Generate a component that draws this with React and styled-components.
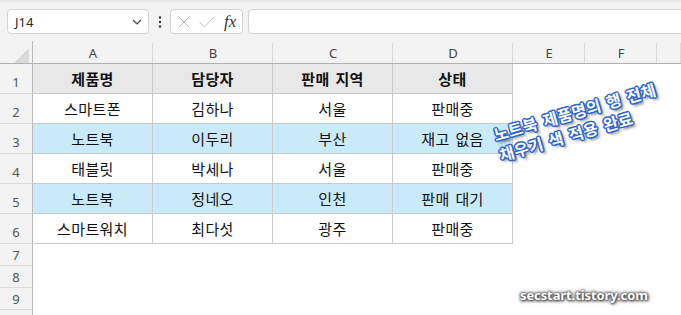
import React from 'react';
import styled, { createGlobalStyle } from 'styled-components';

const Global = createGlobalStyle`
  html, body { margin: 0; padding: 0; background: #fff; overflow: hidden; }
  body { font-family: "Noto Sans", "Noto Sans CJK KR", sans-serif; }
`;

const Page = styled.div`
  position: relative;
  width: 681px;
  height: 315px;
  overflow: hidden;
  background: #fff;
`;

const FormulaBar = styled.div`
  display: flex;
  align-items: stretch;
  height: 41px;
  box-sizing: border-box;
  padding: 7px 0 7px 7px;
  background: #f3f3f3;
  border-top: 2px solid #e6e6e6;
`;

const NameBox = styled.div`
  width: 142px;
  box-sizing: border-box;
  display: flex;
  align-items: center;
  justify-content: space-between;
  padding: 0 6px 0 7px;
  background: #fff;
  border: 1px solid #d3d3d3;
  border-radius: 4px;
  font-size: 13px;
  color: #262626;
`;

const DotsArea = styled.div`
  width: 21px;
  display: flex;
  align-items: center;
  justify-content: center;
`;

const FxButtons = styled.div`
  width: 73px;
  box-sizing: border-box;
  display: flex;
  align-items: center;
  gap: 8px;
  padding: 0 4px 0 6px;
  background: #fff;
  border: 1px solid #d3d3d3;
  border-radius: 4px;
`;

const FxLabel = styled.span`
  font-family: "Liberation Serif", "DejaVu Serif", serif;
  font-style: italic;
  font-size: 17px;
  color: #333;
  margin-left: 1px;
`;

const FormulaInput = styled.div`
  flex: 1;
  margin-left: 5px;
  margin-right: -8px;
  background: #fff;
  border: 1px solid #d3d3d3;
  border-radius: 4px;
`;

const Sheet = styled.div`
  display: grid;
  grid-template-columns: 33px 120px 120px 120px 120px 72px 72px 1fr;
  grid-template-rows: 23px repeat(6, 30px) repeat(4, 22px);
`;

const Corner = styled.div`
  background: #f3f3f3;
  border-right: 1px solid #b9b9b9;
  border-bottom: 1px solid #b0b0b0;
  display: flex;
  align-items: flex-end;
  justify-content: flex-end;
  padding: 0 3px 0 0;
`;

const ColHeader = styled.div`
  background:
    linear-gradient(#dcdcdc, #dcdcdc) right bottom / 1px calc(100% - 2px) no-repeat,
    #f3f3f3;
  border-bottom: 1px solid #b0b0b0;
  display: flex;
  align-items: center;
  justify-content: center;
  font-size: 13px;
  color: #444;
  padding-top: 1px;
`;

const RowHeader = styled.div`
  background: #f3f3f3;
  border-right: 1px solid #b9b9b9;
  border-bottom: 1px solid #dadada;
  display: flex;
  align-items: flex-end;
  justify-content: center;
  padding-bottom: ${p => (p.$tall ? '3px' : '2px')};
  font-size: 13px;
  line-height: 16px;
  color: #555;
  box-sizing: border-box;
`;

const bgFor = (v) => (v === 'head' ? '#e8e8e8' : v === 'blue' ? '#c9eaf9' : '#ffffff');

const Cell = styled.div`
  background: ${p => bgFor(p.$variant)};
  border-right: 1px solid #c9c9c9;
  border-bottom: 1px solid #c9c9c9;
  display: flex;
  align-items: center;
  justify-content: center;
  font-family: "Noto Sans CJK KR", "Noto Sans", sans-serif;
  font-size: 15px;
  letter-spacing: 0.4px;
  word-spacing: 2px;
  font-weight: ${p => (p.$variant === 'head' ? 700 : 400)};
  color: #111;
  white-space: pre;
`;

const Empty = styled.div`
  background: #fff;
`;

const Annotation = styled.div`
  position: absolute;
  left: 491px;
  top: 125px;
  transform: rotate(-16deg);
  transform-origin: 0 0;
  font-family: "Noto Sans CJK KR", sans-serif;
  font-weight: 700;
  font-size: 16px;
  letter-spacing: 0.3px;
  word-spacing: 2px;
  line-height: 21px;
  color: #fff;
  white-space: pre;
  text-shadow:
    -1px -1px 0 #2a62cf, 1px -1px 0 #2a62cf, -1px 1px 0 #2a62cf, 1px 1px 0 #2a62cf,
    0 -1.5px 0 #2a62cf, 0 1.5px 0 #2a62cf, -1.5px 0 0 #2a62cf, 1.5px 0 0 #2a62cf,
    2px 3px 3px rgba(0, 0, 0, 0.6);
`;

const Watermark = styled.div`
  position: absolute;
  left: 520px;
  top: 286px;
  font-family: "Noto Sans", "DejaVu Sans", sans-serif;
  font-weight: 700;
  font-size: 13px;
  letter-spacing: -0.1px;
  color: #fff;
  text-shadow:
    0 0 2px #444, 0 0 3px #555, 1px 1px 3px #333, 0 0 5px rgba(0,0,0,0.5);
`;

const ChevronDown = () => (
  <svg width="10" height="6" viewBox="0 0 10 6">
    <path d="M1 1 L5 5 L9 1" fill="none" stroke="#444" strokeWidth="1.2" />
  </svg>
);

const Dots = () => (
  <svg width="4" height="12" viewBox="0 0 4 12">
    <circle cx="2" cy="1.5" r="1.2" fill="#333" />
    <circle cx="2" cy="6" r="1.2" fill="#333" />
    <circle cx="2" cy="10.5" r="1.2" fill="#333" />
  </svg>
);

const CrossIcon = () => (
  <svg width="14" height="12" viewBox="0 0 14 12">
    <path d="M1.5 0.5 L12.5 11.5 M12.5 0.5 L1.5 11.5" stroke="#bdbdbd" strokeWidth="1" fill="none" />
  </svg>
);

const CheckIcon = () => (
  <svg width="16" height="12" viewBox="0 0 16 12">
    <path d="M0.5 6 L5.5 11 L15.5 0.5" stroke="#bdbdbd" strokeWidth="1" fill="none" />
  </svg>
);

const SelectAllTriangle = () => (
  <svg width="15" height="15" viewBox="0 0 15 15" style={{ display: 'block' }}>
    <path d="M15 0 L15 15 L0 15 Z" fill="#dadada" />
  </svg>
);

const columns = ['A', 'B', 'C', 'D', 'E', 'F', ''];

const header = ['제품명', '담당자', '판매 지역', '상태'];
const rows = [
  { v: 'white', d: ['스마트폰', '김하나', '서울', '판매중'] },
  { v: 'blue', d: ['노트북', '이두리', '부산', '재고 없음'] },
  { v: 'white', d: ['태블릿', '박세나', '서울', '판매중'] },
  { v: 'blue', d: ['노트북', '정네오', '인천', '판매 대기'] },
  { v: 'white', d: ['스마트워치', '최다섯', '광주', '판매중'] },
];

export default function App() {
  const tableRows = [{ v: 'head', d: header }, ...rows];
  return (
    <Page>
      <Global />
      <FormulaBar>
        <NameBox>
          <span>J14</span>
          <ChevronDown />
        </NameBox>
        <DotsArea>
          <Dots />
        </DotsArea>
        <FxButtons>
          <CrossIcon />
          <CheckIcon />
          <FxLabel>fx</FxLabel>
        </FxButtons>
        <FormulaInput />
      </FormulaBar>
      <Sheet>
        <Corner>
          <SelectAllTriangle />
        </Corner>
        {columns.map((c, i) => (
          <ColHeader key={i}>{c}</ColHeader>
        ))}
        {tableRows.map((r, ri) => (
          <React.Fragment key={ri}>
            <RowHeader $tall>{ri + 1}</RowHeader>
            {r.d.map((t, ci) => (
              <Cell key={ci} $variant={r.v}>{t}</Cell>
            ))}
            <Empty />
            <Empty />
            <Empty />
          </React.Fragment>
        ))}
        {[7, 8, 9, null].map((n, k) => (
          <React.Fragment key={k}>
            <RowHeader>{n}</RowHeader>
            {Array.from({ length: 7 }).map((_, i) => (
              <Empty key={i} />
            ))}
          </React.Fragment>
        ))}
      </Sheet>
      <Annotation>{'노트북 제품명의 행 전체\n채우기 색 적용 완료'}</Annotation>
      <Watermark>secstart.tistory.com</Watermark>
    </Page>
  );
}
